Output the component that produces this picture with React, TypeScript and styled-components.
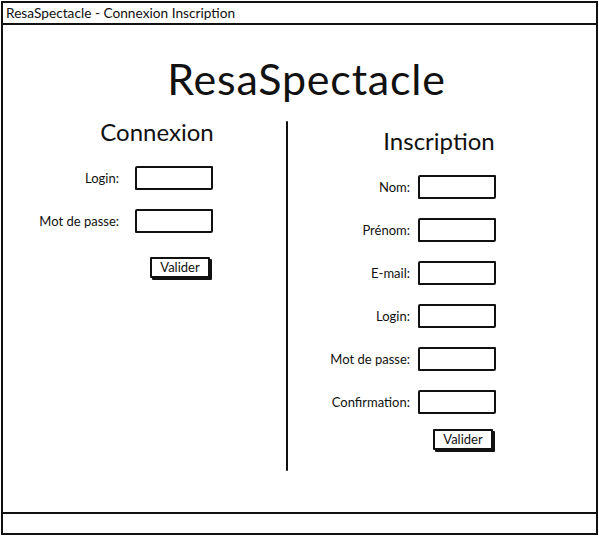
import styled, { createGlobalStyle } from 'styled-components';

const GlobalStyle = createGlobalStyle`
  html, body {
    margin: 0;
    padding: 0;
    background: #ffffff;
  }
  body {
    font-family: Lato, "Noto Sans", sans-serif;
    color: #111111;
  }
`;

const loginFields = ['Login:', 'Mot de passe:'];
const signupFields = ['Nom:', 'Prénom:', 'E-mail:', 'Login:', 'Mot de passe:', 'Confirmation:'];

export default function App() {
  return (
    <>
      <GlobalStyle />
      <Window>
        <TitleBar>ResaSpectacle - Connexion Inscription</TitleBar>
        <Content>
          <AppTitle>ResaSpectacle</AppTitle>
          <Columns>
            <LoginPanel>
              <SectionTitle $offset={25}>Connexion</SectionTitle>
              <Form $labelWidth={116} $gap={16}>
                {loginFields.map((label) => (
                  <Field key={label}>
                    <Label>{label}</Label>
                    <Input type="text" />
                  </Field>
                ))}
                <ButtonRow $top={23}>
                  <Button>Valider</Button>
                </ButtonRow>
              </Form>
            </LoginPanel>
            <Divider />
            <SignupPanel>
              <SectionTitle $offset={-6}>Inscription</SectionTitle>
              <Form $labelWidth={122} $gap={8}>
                {signupFields.map((label) => (
                  <Field key={label}>
                    <Label>{label}</Label>
                    <Input type="text" />
                  </Field>
                ))}
                <ButtonRow $top={14}>
                  <Button>Valider</Button>
                </ButtonRow>
              </Form>
            </SignupPanel>
          </Columns>
        </Content>
        <StatusBar />
      </Window>
    </>
  );
}

const Window = styled.div`
  box-sizing: border-box;
  width: 597px;
  height: 534px;
  margin: 1px 0 0 1px;
  border: 2px solid #111111;
  display: flex;
  flex-direction: column;
  background: #ffffff;
`;

const TitleBar = styled.div`
  height: 20px;
  padding-left: 3px;
  border-bottom: 2px solid #111111;

  font-size: 13.7px;
  line-height: 20px;
  white-space: nowrap;
`;

const Content = styled.div`
  flex: 1;
  display: flex;
  flex-direction: column;
  padding-top: 30px;
`;

const AppTitle = styled.h1`
  margin: 0 0 14px;
  padding-left: 14px;

  font-weight: 400;
  font-size: 43px;
  line-height: 48px;
  text-align: center;
  letter-spacing: 0.8px;
`;

const Columns = styled.div`
  display: flex;
  align-items: flex-start;
`;

const LoginPanel = styled.section`
  width: 283px;
  display: flex;
  flex-direction: column;
`;

const SignupPanel = styled.section`
  flex: 1;
  display: flex;
  flex-direction: column;
  padding-top: 9px;
`;

const Divider = styled.div`
  width: 2px;
  height: 350px;
  margin-top: 4px;
  background: #111111;
  border-radius: 1px;
`;

const SectionTitle = styled.h2<{ $offset: number }>`
  margin: 0 0 19px;
  padding-left: ${({ $offset }) => Math.max($offset, 0)}px;
  padding-right: ${({ $offset }) => Math.max(-$offset, 0)}px;

  font-weight: 400;
  font-size: 24px;
  line-height: 30px;
  text-align: center;
`;

const Form = styled.div<{ $labelWidth: number; $gap: number }>`
  display: grid;
  grid-template-columns: ${({ $labelWidth }) => $labelWidth}px 78px;
  column-gap: ${({ $gap }) => $gap}px;
  row-gap: 19px;
`;

const Field = styled.div`
  display: contents;
`;

const Label = styled.label`
  justify-self: end;
  align-self: center;

  font-size: 13px;
  white-space: nowrap;
`;

const Input = styled.input`
  box-sizing: border-box;
  width: 78px;
  height: 24px;
  margin: 0;
  padding: 0 4px;
  border: 2px solid #111111;
  border-radius: 2px 1px 2px 1px;
  background: #ffffff;
  font: inherit;
`;

const ButtonRow = styled.div<{ $top: number }>`
  grid-column: 2;
  margin-top: ${({ $top }) => $top - 19}px;
  padding-left: 15px;
`;

const Button = styled.button`
  box-sizing: border-box;
  width: 60px;
  height: 21px;
  padding: 0;
  border: 2px solid #111111;
  border-radius: 1px;
  background: #ffffff;
  box-shadow: 2px 2px 0 #111111;

  color: #111111;
  font-family: inherit;
  font-size: 13px;
  line-height: 17px;
`;

const StatusBar = styled.div`
  height: 19px;
  border-top: 2px solid #111111;
`;
